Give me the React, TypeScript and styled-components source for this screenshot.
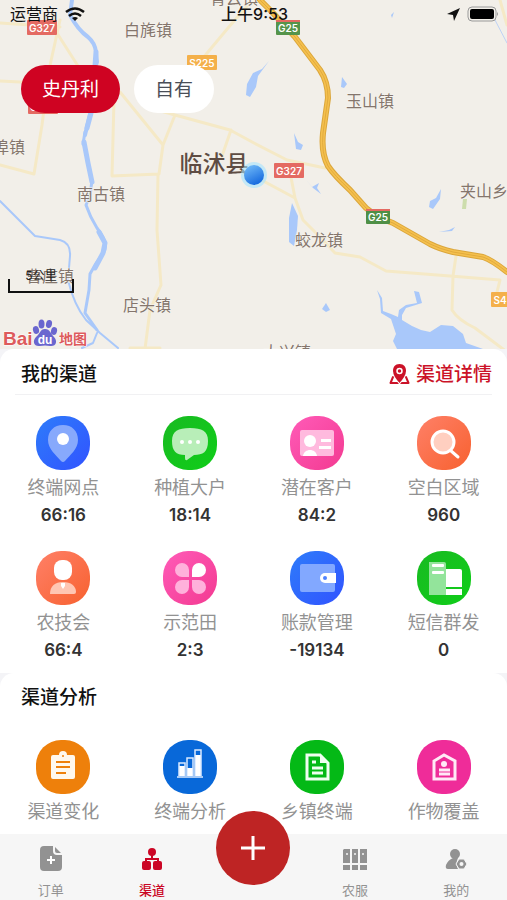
import React from 'react';
import styled, { createGlobalStyle } from 'styled-components';

const GlobalStyle = createGlobalStyle`
  * { box-sizing: border-box; }
  body {
    margin: 0;
    background: #f4f4f7;
    font-family: Inter, "Noto Sans CJK SC", sans-serif;
    color: #111;
  }
  button { font: inherit; border: 0; padding: 0; background: none; cursor: pointer; }
  svg { display: block; }
`;

const Page = styled.div`
  min-height: 100vh;
  display: flex;
  flex-direction: column;
`;

const MapPanel = styled.header`
  position: relative;
  height: 349px;
  flex: none;
  overflow: hidden;
  background: #f2efe9;
`;

const MapCanvas = styled.svg`
  position: absolute;
  inset: 0;
  width: 100%;
  height: 100%;
`;

const StatusBar = styled.div`
  position: relative;
  display: grid;
  grid-template-columns: 1fr auto 1fr;
  align-items: center;
  height: 28px;
  padding: 0 8px 0 10px;
  font-size: 16px;
  line-height: 20px;
  color: #111;
`;

const Carrier = styled.div`
  display: flex;
  align-items: center;
  gap: 7px;
`;

const Clock = styled.div`
  font-weight: 500;
`;

const Indicators = styled.div`
  display: flex;
  align-items: center;
  justify-content: flex-end;
  gap: 7px;
`;

const Filters = styled.div`
  position: relative;
  display: flex;
  gap: 14px;
  padding: 37px 21px 0;
`;

const Pill = styled.button<{ $active?: boolean }>`
  && {
    height: 48px;
    padding: 2px 21px 0;
    border-radius: 24px;
    font-size: 19px;
    line-height: 24px;
    color: ${(p) => (p.$active ? '#fff' : '#4a4e57')};
    background: ${(p) => (p.$active ? '#cf0322' : '#fff')};
  }
`;

const ScaleBar = styled.div`
  position: absolute;
  left: 8px;
  bottom: 56px;
  width: 66px;
  height: 25px;
  font-size: 12px;
  line-height: 16px;
  text-align: center;
  color: #222;
  &::after {
    content: '';
    position: absolute;
    left: 0;
    right: 0;
    bottom: 0;
    height: 12px;
    border: solid #111;
    border-width: 0 2px 2px;
  }
`;

const MapLogo = styled.svg`
  position: absolute;
  left: 3px;
  bottom: 0;
`;

const Card = styled.section<{ $grow?: boolean }>`
  background: #fff;
  border-radius: 14px 14px 0 0;
  flex: ${(p) => (p.$grow ? '1 0 auto' : 'none')};
  padding-bottom: ${(p) => (p.$grow ? '7px' : '11px')};
`;

const CardHead = styled.div<{ $ruled?: boolean }>`
  display: flex;
  align-items: center;
  justify-content: space-between;
  height: 46px;
  margin: 0 15px;
  padding: ${(p) => (p.$ruled ? '6px' : '4px')} 0 0 6px;
  border-bottom: ${(p) => (p.$ruled ? '1px solid #f1f1f3' : '0')};
`;

const CardTitle = styled.h2`
  margin: 0;
  font-size: 19px;
  line-height: 28px;
  font-weight: 500;
`;

const DetailLink = styled.a`
  display: flex;
  align-items: center;
  gap: 6px;
  font-size: 19px;
  line-height: 28px;
  font-weight: 500;
  color: #cb1228;
  text-decoration: none;
`;

const Grid = styled.div`
  display: grid;
  grid-template-columns: repeat(4, 1fr);
  row-gap: 24px;
  padding-top: 21px;
`;

const Tile = styled.button`
  display: flex;
  flex-direction: column;
  align-items: center;
`;

const TileIcon = styled.span<{ $bg: string }>`
  width: 54px;
  height: 54px;
  border-radius: 25px;
  background: ${(p) => p.$bg};
`;

const TileLabel = styled.span`
  margin-top: 5px;
  font-size: 18px;
  line-height: 26px;
  color: #929292;
`;

const TileValue = styled.span`
  margin-top: 2px;
  font-size: 17px;
  line-height: 24px;
  font-weight: 600;
  color: #333;
`;

const TabBar = styled.nav`
  position: sticky;
  bottom: 0;
  display: grid;
  grid-template-columns: repeat(5, 1fr);
  height: 66px;
  flex: none;
  background: #f6f6f6;
`;

const Tab = styled.button<{ $active?: boolean }>`
  && {
    display: flex;
    flex-direction: column;
    align-items: center;
    padding-top: 12px;
    gap: 8px;
    font-size: 13px;
    line-height: 20px;
    font-weight: ${(p) => (p.$active ? 500 : 400)};
    color: ${(p) => (p.$active ? '#cb0625' : '#929292')};
  }
`;

const AddButton = styled.button`
  && {
    justify-self: center;
    display: grid;
    place-items: center;
    width: 74px;
    height: 74px;
    margin-top: -23px;
    border-radius: 50%;
    background: #be2424;
  }
`;

const towns: [string, number, number][] = [
  ['白旄镇', 148, 36],
  ['玉山镇', 370, 107],
  ['南古镇', 101, 200],
  ['夹山乡', 484, 197],
  ['蛟龙镇', 319, 246],
  ['曹庄镇', 50, 282],
  ['店头镇', 147, 311],
  ['大兴镇', 287, 358],
  ['青云镇', 234, 4],
  ['埠镇', 9, 153],
];

const shields: [string, number, number, string][] = [
  ['G327', 42, 28, '#e46a62'],
  ['G327', 43, 107, '#e46a62'],
  ['G327', 289, 171, '#e46a62'],
  ['S225', 202, 63, '#f4b04a'],
  ['S4', 500, 300, '#f4b04a'],
  ['G25', 288, 28, '#55944b'],
  ['G25', 378, 217, '#4f8f46'],
];

const highway =
  'M260 0 L273 13 L295 37 L320 70 Q328 82 328 98 L323 133 Q321 153 328 166 Q334 175 350 190 L366 208 Q378 218 393 223 L430 244 Q440 249 453 252 L483 257 Q492 260 507 272';

const minorRoads =
  'M0 23 L60 27 M0 81 L40 83 M60 20 L49 70 L42 125 L34 174 L0 165 M55 30 L78 66 M248 5 L228 28 L203 58 L198 70 M120 92 L163 145 L159 174 L112 176 L114 100 M163 145 L175 115 L230 130 L254 143 L287 160 L325 168 M231 130 L222 156 M175 115 L150 108 M158 175 L157 230 L161 285 L150 310 L145 349 M130 348 H160 M254 176 L295 198 L303 220 L316 233 L335 253 L360 257 L386 271 L450 276 L500 280 L497 292 M295 198 L290 172 M456 256 L453 276 L452 310 Q458 320 475 328 L507 352 M500 0 L507 25';

function MapView() {
  return (
    <MapCanvas viewBox="0 0 507 349" preserveAspectRatio="xMidYMid slice" role="img" aria-label="临沭县地图">
      <rect width="507" height="349" fill="#f2efe9" />
      <g fill="none" strokeLinejoin="round" strokeLinecap="round">
        <path d={minorRoads} stroke="#f5e9c6" strokeWidth="3" />
        <path d="M72 0 L70 15 Q78 30 88 37 Q95 43 96 52 L97 62 L93 75 L91 110 L85 135" stroke="#a9c8fa" strokeWidth="4" />
        <path d="M96 52 L95 66 M84 142 L88 163 L92 182 M91 113 L87 128" stroke="#a9c8fa" strokeWidth="5" />
        <path d="M85 132 L83 144 M92 180 L90 196 L86 205 Q90 217 97 228 Q109 243 104 252 Q96 262 90 274 L89 290 L85 313 L97 330" stroke="#a9c8fa" strokeWidth="3" />
        <path d="M99 232 L105 243 L103 253 L95 268" stroke="#a9c8fa" strokeWidth="5" />
        <path d="M0 201 L35 236 L60 240 Q71 243 70 256 L68 280 Q74 305 86 320 L100 333 L118 348 M97 333 L93 343 L82 348" stroke="#a9c8fa" strokeWidth="2" />
        <path d="M495 20 L507 43" stroke="#bdd2f5" strokeWidth="1" />
        <path d={highway} stroke="#dba63b" strokeWidth="6" />
        <path d={highway} stroke="#f5c04e" strokeWidth="4" />
        <path d={highway} stroke="#e1ab3e" strokeWidth="1" />
      </g>
      <g fill="#a9c8fa">
        <path d="M269 61 L262 69 L253 73 L247 84 L246 95 L250 97 L256 87 L258 76 Z" />
        <path d="M342 77 L347 84 L344 88 L341 87 Z M294 133 L298 142 L303 145 L301 150 L296 149 Z M391 15 L394 12 L392 18 Z" />
        <path d="M292 203 L298 216 L297 230 L294 246 L289 242 L289 218 Z" />
        <path d="M306 180 L312 187 L319 183 L317 188 L321 194 L313 188 Z" />
        <path d="M441 189 L440 199 L433 209 L429 207 L430 201 L436 198 Z M439 232 L449 230 L455 227 L452 231 Z" />
        <path d="M326 303 L330 310 L326 312 L322 309 Z" />
        <path d="M377 290 L382 298 L383 311 L391 314 L398 317 L399 310 L406 305 L417 303 L414 291 L419 292 L422 303 L406 308 L402 315 L402 320 L412 326 L421 330 L430 332 L441 325 L453 326 L463 334 L466 343 L483 349 L397 349 L393 341 L396 334 L391 319 L381 313 L380 299 Z" />
      </g>
      <path d="M463 199 L467 199 L466 209 L462 209 Z" fill="#cdddac" />
      {shields.map(([text, x, y, color], i) => (
        <g key={i}>
          <rect x={x - (text.length * 3 + 3)} y={y - 8} width={text.length * 6 + 6} height="15" rx="1" fill={color} />
          {text === 'G25' && <rect x={x - 12} y={y - 8} width="24" height="2" fill="#e46a62" />}
          <text x={x} y={y + 4} textAnchor="middle" fontFamily="Inter, sans-serif" fontSize="10" fontWeight="600" fill="#fff">
            {text}
          </text>
        </g>
      ))}
      <g fontFamily='"Noto Sans CJK SC", sans-serif' textAnchor="middle">
        <g fontSize="16" fill="#84756c" stroke="#f7f5f0" strokeWidth="1" paintOrder="stroke">
          {towns.map(([name, x, y]) => (
            <text key={name} x={x} y={y}>{name}</text>
          ))}
        </g>
        <text x="214" y="172" fontSize="23" fontWeight="500" fill="#5e4c43">临沭县</text>
      </g>
      <circle cx="254" cy="175" r="13" fill="#a5e2ff" opacity="0.6" />
      <circle cx="254" cy="175" r="10" fill="url(#dot)" />
      <defs>
        <linearGradient id="dot" x1="0.2" y1="0" x2="0.7" y2="1">
          <stop offset="0" stopColor="#71baf8" />
          <stop offset="1" stopColor="#1266dd" />
        </linearGradient>
      </defs>
    </MapCanvas>
  );
}

function BaiduLogo() {
  return (
    <MapLogo width="86" height="32" viewBox="0 0 86 32" role="img" aria-label="Baidu 地图">
      <g fill="#dd5b5c" stroke="#fff" strokeWidth="1" paintOrder="stroke">
        <text x="0" y="28" fontFamily='"Liberation Sans", sans-serif' fontSize="19" fontWeight="700">Bai</text>
        <text x="56" y="27" fontFamily='"Noto Sans CJK SC", sans-serif' fontSize="14" fontWeight="700">地图</text>
      </g>
      <g fill="#6a66cf">
        <ellipse cx="33" cy="13" rx="3" ry="4" transform="rotate(-15 33 13)" />
        <ellipse cx="38.500" cy="7" rx="3" ry="4.500" />
        <ellipse cx="46" cy="7" rx="3" ry="4" transform="rotate(12 46 7)" />
        <ellipse cx="51" cy="14" rx="3" ry="4" transform="rotate(15 51 14)" />
        <path d="M42 12 C47 12 48 17 51 20 C55 24 53 30 47 29 Q42 28 37 29 C31 30 29 24 33 20 C37 17 37 12 42 12 Z" />
      </g>
      <text x="42" y="27" textAnchor="middle" fontFamily='"Liberation Sans", sans-serif' fontSize="12" fontWeight="700" fill="#fff">du</text>
    </MapLogo>
  );
}

const blue = 'linear-gradient(135deg, #2e7cfa, #3153ff)';
const green = 'linear-gradient(135deg, #19ba22, #0fce18)';
const pink = 'linear-gradient(135deg, #ff5bb8, #f33a91)';
const orange = 'linear-gradient(135deg, #ff8068, #f7612f)';

interface Item {
  label: string;
  value?: string;
  bg: string;
  art: React.ReactNode;
}

const channels: Item[] = [
  {
    label: '终端网点', value: '66:16', bg: blue,
    art: (
      <>
        <path d="M27 9 C18 9 12 15 12 24 C12 33 20 39 25 45 Q27 47 29 45 C34 39 42 33 42 24 C42 15 36 9 27 9 Z" fill="#87a9fc" />
        <circle cx="27" cy="23" r="6" fill="#fff" />
      </>
    ),
  },
  {
    label: '种植大户', value: '18:14', bg: green,
    art: (
      <>
        <path d="M9 25 C9 15 15 12 27 12 C39 12 45 15 45 25 C45 36 40 39 31 39 L24 44 Q22 45 22 42 V39 C13 39 9 35 9 25 Z" fill="#b8eeb8" />
        <g fill="#fff"><circle cx="19" cy="26" r="2" /><circle cx="27" cy="26" r="2" /><circle cx="35" cy="26" r="2" /></g>
      </>
    ),
  },
  {
    label: '潜在客户', value: '84:2', bg: pink,
    art: (
      <>
        <rect x="10" y="14" width="34" height="26" rx="2" fill="#ffbade" />
        <g fill="#fff"><circle cx="20" cy="25" r="6" /><path d="M13 40 C14 32 26 32 27 40 Z" /><rect x="31" y="23" width="10" height="3" /><rect x="29" y="30" width="12" height="3" /></g>
      </>
    ),
  },
  {
    label: '空白区域', value: '960', bg: orange,
    art: (
      <>
        <path d="M33 34 L41 41" stroke="#fff" strokeWidth="3" strokeLinecap="round" />
        <circle cx="26" cy="26" r="11" fill="#ffcfc0" stroke="#fff" strokeWidth="3" />
      </>
    ),
  },
  {
    label: '农技会', value: '66:4', bg: orange,
    art: (
      <>
        <path d="M14 43 C14 35 19 31 27 31 C35 31 40 35 40 41 Q40 43 38 43 Z" fill="#ffc6b3" />
        <rect x="18" y="9" width="18" height="20" rx="8" fill="#fff" />
        <path d="M25 32 H29 L29 35 L27 38 L25 35 Z" fill="#fff" />
      </>
    ),
  },
  {
    label: '示范田', value: '2:3', bg: pink,
    art: (
      <>
        <g fill="#ffb1db">
          <path d="M26 26 H19 A7 7 0 1 1 26 19 Z" />
          <path d="M26 29 V36 A7 7 0 1 1 19 29 Z" />
          <path d="M29 29 H36 A7 7 0 1 1 29 36 Z" />
        </g>
        <path d="M29 26 V19 A7 7 0 1 1 36 26 Z" fill="#fff" />
      </>
    ),
  },
  {
    label: '账款管理', value: '-19134', bg: blue,
    art: (
      <>
        <rect x="10" y="13" width="35" height="28" rx="2" fill="#82a8ff" />
        <path d="M46 22 H35 A5 5 0 0 0 35 32 H46 Z" fill="#fff" />
        <circle cx="35" cy="27" r="2" fill="#4f82ff" />
      </>
    ),
  },
  {
    label: '短信群发', value: '0', bg: green,
    art: (
      <>
        <path d="M12 11 H27 Q29 11 29 13 V44 H12 Z" fill="#93e49b" />
        <g fill="#fff"><rect x="15" y="13" width="12" height="3" rx="1" /><rect x="15" y="20" width="12" height="3" rx="1" /><path d="M29 18 H43 Q45 18 45 20 V36 H29 Z M29 38 H45 V44 H29 Z" /></g>
      </>
    ),
  },
];

const analysis: Item[] = [
  {
    label: '渠道变化', bg: '#ee800b',
    art: (
      <>
        <path d="M17 15 H23 A4 4 0 0 1 31 15 H37 Q39 15 39 17 V37 Q39 39 37 39 H17 Q15 39 15 37 V17 Q15 15 17 15 Z" fill="#fff8ed" />
        <circle cx="27" cy="16" r="1" fill="#ee800b" />
        <path d="M20 22 H34 M20 27 H34 M20 33 H30" stroke="#ee800b" strokeWidth="2" />
      </>
    ),
  },
  {
    label: '终端分析', bg: '#0868d9',
    art: (
      <>
        <g fill="#fff"><path d="M16 26 H22 V36 H16 Z M24 28 H30 V36 H24 Z M32 15 H38 V36 H32 Z" /></g>
        <path d="M14 37 H40 M16 36 V23 H22 V36 M24 36 V18 H30 V36 M32 36 V10 H38 V36" fill="none" stroke="#d9e9ff" strokeWidth="1.500" />
      </>
    ),
  },
  {
    label: '乡镇终端', bg: '#04b916',
    art: (
      <>
        <path d="M17 15 H30 L38 23 V39 H17 Z" fill="none" stroke="#effff0" strokeWidth="3" />
        <path d="M30 15 V23 H38 Z" fill="#effff0" />
        <path d="M22 22 H26 M22 28 H33 M22 33 H33" stroke="#effff0" strokeWidth="3" />
      </>
    ),
  },
  {
    label: '作物覆盖', bg: '#ef2c99',
    art: (
      <>
        <path d="M17 39 V21 L27 15 L38 21 V39 Z" fill="none" stroke="#ffe9f6" strokeWidth="3" />
        <circle cx="27" cy="24" r="3" fill="#ffe9f6" />
        <path d="M22 30 H33 M22 34 H33" stroke="#ffe9f6" strokeWidth="3" />
      </>
    ),
  },
];

function Tiles({ items }: { items: Item[] }) {
  return (
    <Grid>
      {items.map((item) => (
        <Tile key={item.label} type="button">
          <TileIcon $bg={item.bg}>
            <svg width="54" height="54" viewBox="0 0 54 54" fill="none" aria-hidden="true">{item.art}</svg>
          </TileIcon>
          <TileLabel>{item.label}</TileLabel>
          {item.value && <TileValue>{item.value}</TileValue>}
        </Tile>
      ))}
    </Grid>
  );
}

function TabIcon({ children }: { children: React.ReactNode }) {
  return (
    <svg width="26" height="26" viewBox="0 0 26 26" fill="currentColor" aria-hidden="true">{children}</svg>
  );
}

export default function App() {
  return (
    <>
      <GlobalStyle />
      <Page>
        <MapPanel>
          <MapView />
          <StatusBar>
            <Carrier>
              运营商
              <svg width="20" height="15" viewBox="0 0 20 15" fill="none" stroke="#111" strokeWidth="2.500" aria-hidden="true">
                <path d="M1 5 Q10 -2 19 5 M4 9 Q10 4 16 9" />
                <path d="M7 11 Q10 9 13 11 L10 14 Z" fill="#111" stroke="none" />
              </svg>
            </Carrier>
            <Clock>上午9:53</Clock>
            <Indicators>
              <svg width="13" height="13" viewBox="0 0 13 13" fill="#111" aria-hidden="true">
                <path d="M13 0 L7 13 L6 7 L0 6 Z" />
              </svg>
              <svg width="32" height="16" viewBox="0 0 32 16" aria-hidden="true">
                <rect x="1" y="1" width="28" height="14" rx="4" fill="none" stroke="#999" strokeWidth="1" />
                <rect x="3" y="3" width="24" height="10" rx="2" fill="#000" />
                <path d="M30 6 Q32 8 30 10 Z" fill="#999" />
              </svg>
            </Indicators>
          </StatusBar>
          <Filters>
            <Pill type="button" $active>史丹利</Pill>
            <Pill type="button">自有</Pill>
          </Filters>
          <ScaleBar>5公里</ScaleBar>
          <BaiduLogo />
        </MapPanel>

        <Card>
          <CardHead $ruled>
            <CardTitle>我的渠道</CardTitle>
            <DetailLink href="#details">
              <svg width="21" height="22" viewBox="0 0 21 22" fill="none" aria-hidden="true">
                <path d="M4 13 L1.500 19 H19.500 L17 13" stroke="#cb1228" strokeWidth="2" strokeLinejoin="round" strokeLinecap="round" />
                <path d="M10.500 0 C6 0 4 3 4 7 C4 11 7 15 10.500 19 C14 15 17 11 17 7 C17 3 15 0 10.500 0 Z" fill="#cb1228" stroke="#fff" strokeWidth="2" paintOrder="stroke" />
                <circle cx="10.500" cy="7" r="2.500" stroke="#fff" strokeWidth="1.500" />
              </svg>
              渠道详情
            </DetailLink>
          </CardHead>
          <Tiles items={channels} />
        </Card>

        <Card $grow>
          <CardHead>
            <CardTitle>渠道分析</CardTitle>
          </CardHead>
          <Tiles items={analysis} />
        </Card>

        <TabBar>
          <Tab type="button">
            <TabIcon>
              <path d="M6 0 H15 V5 Q15 9 19 9 H24 V21 Q24 25 20 25 H6 Q2 25 2 21 V4 Q2 0 6 0 Z M17 1 L23 7 H19 Q17 7 17 5 Z" />
              <path d="M13 10 V18 M9 14 H17" stroke="#fff" strokeWidth="2" />
            </TabIcon>
            订单
          </Tab>
          <Tab type="button" $active>
            <TabIcon>
              <circle cx="13" cy="6" r="4" />
              <path d="M13 8 V13 M7 16 V13 H19 V16" fill="none" stroke="currentColor" strokeWidth="2" />
              <rect x="3" y="15" width="9" height="9" rx="2" />
              <rect x="14" y="15" width="9" height="9" rx="2" />
            </TabIcon>
            渠道
          </Tab>
          <AddButton type="button" aria-label="添加">
            <svg width="26" height="26" viewBox="0 0 26 26" stroke="#fff" strokeWidth="3" aria-hidden="true">
              <path d="M13 1 V25 M1 13 H25" />
            </svg>
          </AddButton>
          <Tab type="button">
            <TabIcon>
              <path d="M2 3 H8 V17 H1 V4 Z M10 3 H16 V17 H10 Z M18 3 H25 V17 H18 Z M1 19 H8 V24 H1 Z M10 19 H16 V24 H10 Z M18 19 H25 V24 H18 Z" />
              <g fill="#f6f6f6"><circle cx="5" cy="8" r="1" /><circle cx="13" cy="8" r="1" /><circle cx="21" cy="8" r="1" /></g>
            </TabIcon>
            农服
          </Tab>
          <Tab type="button">
            <TabIcon>
              <circle cx="12" cy="8" r="5" />
              <path d="M10 12 H15 Q12 18 15 23 H5 Q2 23 3 19 Q5 14 10 12 Z" />
              <path d="M16 13 H21 L24 18 L21 23 H16 L13 18 Z" stroke="#f6f6f6" strokeWidth="1" />
              <circle cx="18.500" cy="18" r="2" fill="#f6f6f6" />
            </TabIcon>
            我的
          </Tab>
        </TabBar>
      </Page>
    </>
  );
}
